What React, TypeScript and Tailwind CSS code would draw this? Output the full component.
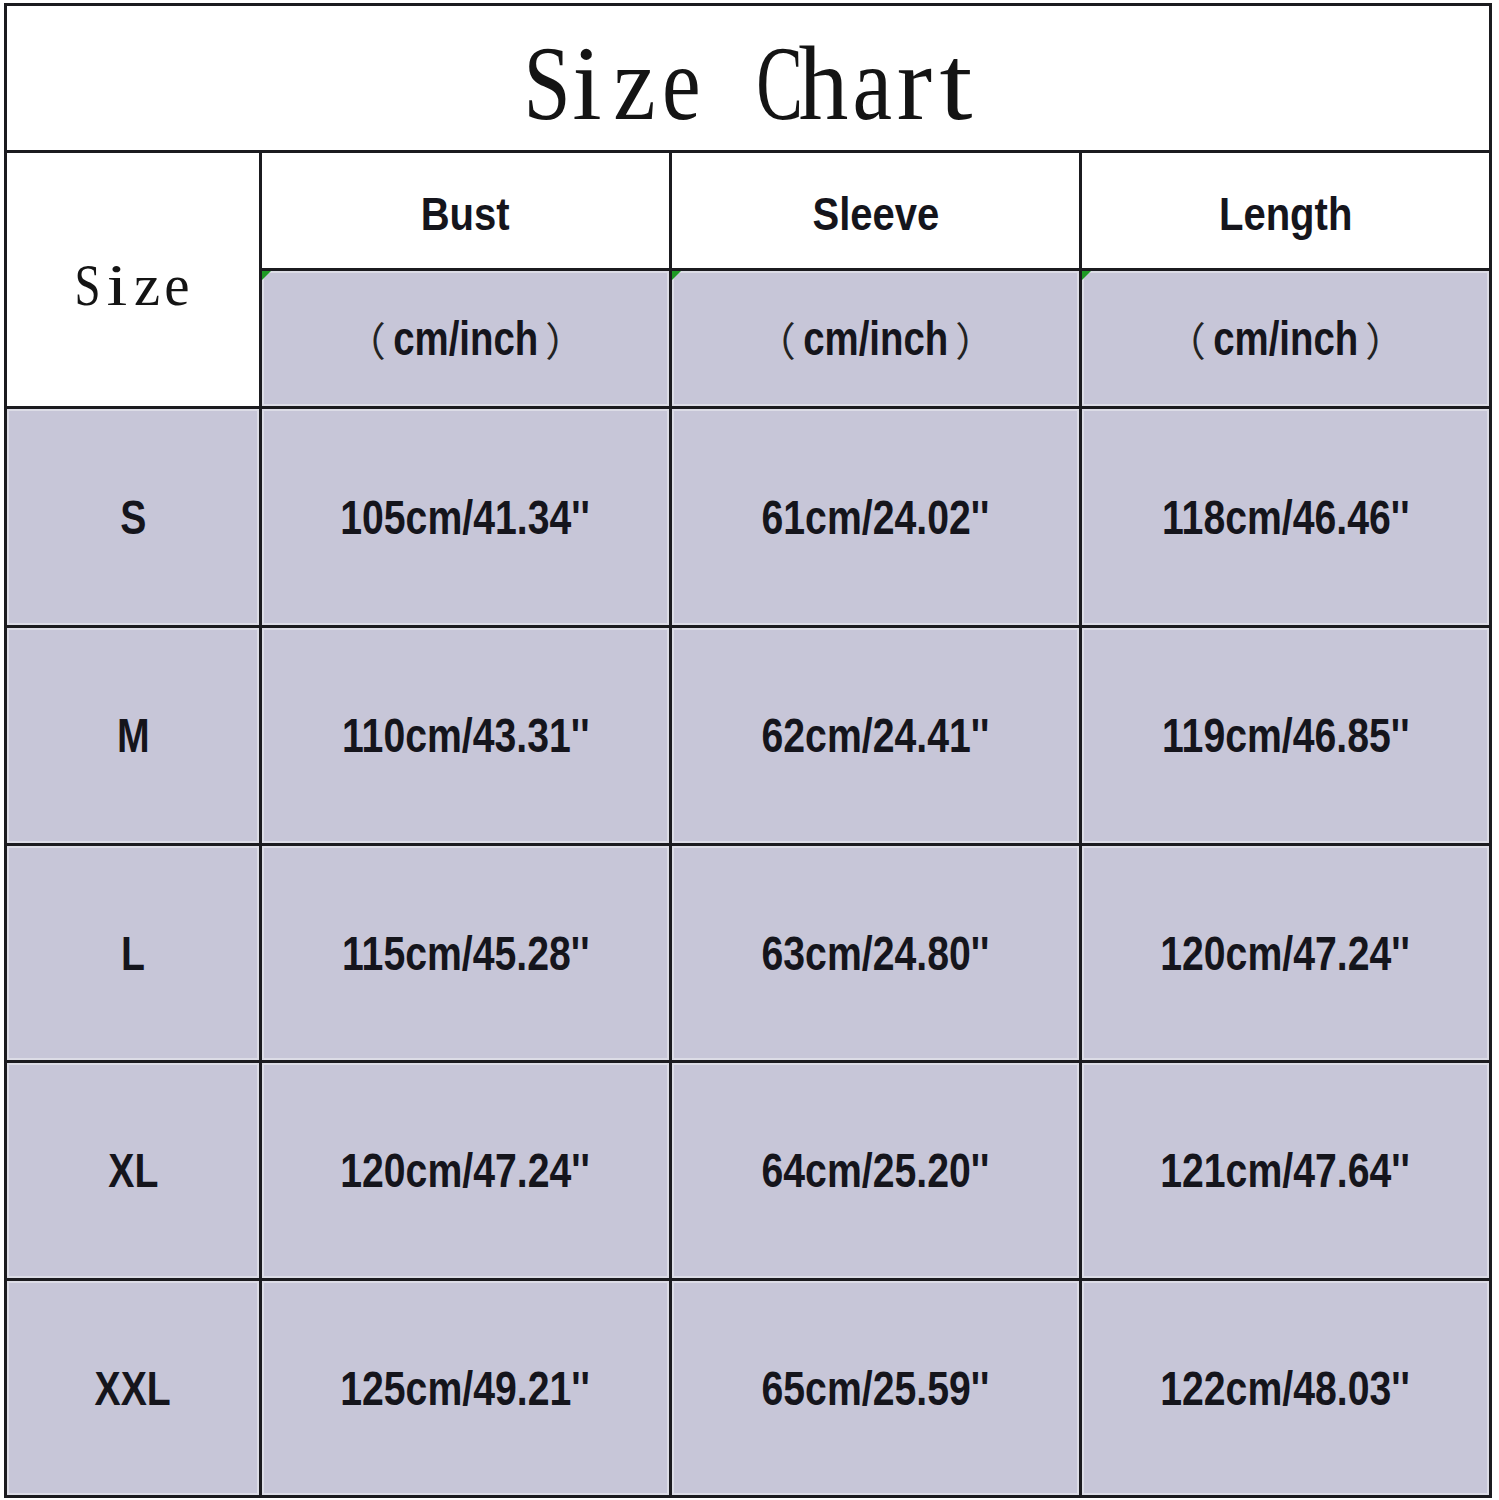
import React from "react";

const rows = [
  ["S", "105cm/41.34''", "61cm/24.02''", "118cm/46.46''"],
  ["M", "110cm/43.31''", "62cm/24.41''", "119cm/46.85''"],
  ["L", "115cm/45.28''", "63cm/24.80''", "120cm/47.24''"],
  ["XL", "120cm/47.24''", "64cm/25.20''", "121cm/47.64''"],
  ["XXL", "125cm/49.21''", "65cm/25.59''", "122cm/48.03''"],
];

const titleChars: [string, string][] = [
  ["S", "w-[44px] scale-x-[0.8]"],
  ["i", "w-[48px] scale-x-[1.0]"],
  ["z", "w-[47px] scale-x-[0.9]"],
  ["e", "w-[44px] scale-x-[0.82]"],
  ["\u00a0", "w-[46px]"],
  ["C", "w-[49px] scale-x-[0.66]"],
  ["h", "w-[52px] scale-x-[0.94]"],
  ["a", "w-[45px] scale-x-[0.84]"],
  ["r", "w-[41px] scale-x-[1.0]"],
  ["t", "w-[42px] scale-x-[1.12]"],
];

const sizeChars: [string, string][] = [
  ["S", "w-[31px] scale-x-[0.78]"],
  ["i", "w-[30px] scale-x-[1.25]"],
  ["z", "w-[30px] scale-x-[0.98]"],
  ["e", "w-[30px] scale-x-[0.95]"],
];

function MonoTitle({ chars, size }: { chars: [string, string][]; size: string }) {
  return (
    <div className={`flex font-['Liberation_Serif',serif] text-[#141414] leading-none ${size}`}>
      {chars.map(([c, cls], i) => (
        <span key={i} className={`inline-block text-center ${cls}`}>
          {c}
        </span>
      ))}
    </div>
  );
}

const gray = "bg-[#c7c6d8] shadow-[inset_0_0_0_2px_#dcdce6]";
const arial = "font-['Liberation_Sans',Arial,sans-serif] font-bold text-[#15151c]";

function Unit() {
  return (
    <div className={`relative ${gray} flex items-center justify-center`}>
      <span className="absolute left-0 top-0 w-0 h-0 border-t-[9px] border-t-[#1f9a24] border-r-[9px] border-r-transparent" />
      <div className="flex items-center">
        <span className="font-['Noto_Sans_CJK_SC',sans-serif] text-[40px] leading-none text-[#222]">（</span>
        <span className={`${arial} text-[48px] leading-none inline-block scale-x-[0.8] -mx-[11px]`}>cm/inch</span>
        <span className="font-['Noto_Sans_CJK_SC',sans-serif] text-[40px] leading-none text-[#222]">）</span>
      </div>
    </div>
  );
}

function Head({ label }: { label: string }) {
  return (
    <div className="bg-white flex items-center justify-center pt-[6px]">
      <span className={`${arial} text-[46px] leading-none inline-block scale-x-[0.87]`}>{label}</span>
    </div>
  );
}

function Data({ v }: { v: string }) {
  return (
    <div className={`${gray} flex items-center justify-center`}>
      <span className={`${arial} text-[49px] leading-none inline-block scale-x-[0.8]`}>{v}</span>
    </div>
  );
}

export default function App() {
  return (
    <div className="w-[1499px] h-[1500px] bg-white pt-[3px] pl-[4px]">
      <div className="grid w-[1488px] grid-cols-[252px_407px_407px_407px] grid-rows-[144px_115px_135px_216px_215px_214px_215px_214px] gap-[3px] p-[3px] bg-[#1b1b1f]">
        <div className="col-span-4 bg-white flex items-center justify-center pt-[12px]">
          <MonoTitle chars={titleChars} size="text-[106px]" />
        </div>
        <div className="row-span-2 bg-white flex items-center justify-center pt-[10px] pr-[4px]">
          <MonoTitle chars={sizeChars} size="text-[60px]" />
        </div>
        <Head label="Bust" />
        <Head label="Sleeve" />
        <Head label="Length" />
        <Unit />
        <Unit />
        <Unit />
        {rows.map((r) => (
          <React.Fragment key={r[0]}>
            <Data v={r[0]} />
            <Data v={r[1]} />
            <Data v={r[2]} />
            <Data v={r[3]} />
          </React.Fragment>
        ))}
      </div>
    </div>
  );
}
